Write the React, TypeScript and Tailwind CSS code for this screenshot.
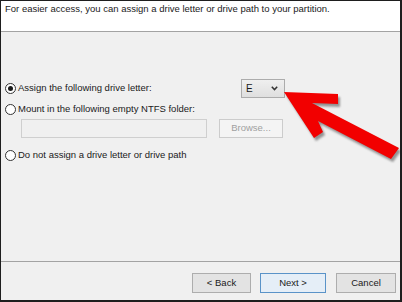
const font = { fontFamily: '"Liberation Sans", Arial, sans-serif' };

function Radio({ checked }: { checked?: boolean }) {
  return (
    <span className="w-[11px] h-[11px] rounded-full border border-[#333] bg-white flex items-center justify-center shrink-0">
      {checked && <span className="w-[5px] h-[5px] rounded-full bg-[#1a1a1a]" />}
    </span>
  );
}

function Btn({ label, w, focused }: { label: string; w: string; focused?: boolean }) {
  return (
    <div
      className={`${w} h-[20px] flex items-center justify-center border text-[9.5px] text-[#1a1a1a] ${
        focused ? "border-[#5a93c8] bg-[#e5eef7]" : "border-[#adadad] bg-[#e3e3e3]"
      }`}
    >
      {label}
    </div>
  );
}

export default function App() {
  const pts = [
    [284, 92],
    [338, 94],
    [338, 104],
    [312, 103],
    [399, 148],
    [391, 159],
    [318, 121],
    [323, 132],
    [314, 138],
  ]
    .map((p) => p.join(","))
    .join(" ");

  return (
    <div
      className="relative w-[402px] h-[302px] overflow-hidden flex flex-col bg-[#f0f0f0] border-l border-t border-r-2 border-b-2 border-[#1e1e1e] text-[#1a1a1a]"
      style={font}
    >
      <div className="h-[31px] bg-white border-b border-[#a3a3a3] pl-[4px] pt-[1px] text-[9.5px] leading-[14px]">
        For easier access, you can assign a drive letter or drive path to your partition.
      </div>

      <div className="flex-1 pt-[47px] pl-[4px] text-[9.5px]">
        <div className="flex items-center h-[19px]">
          <div className="w-[236px] flex items-center gap-[2px]">
            <Radio checked />
            <span>Assign the following drive letter:</span>
          </div>
          <div className="w-[44px] h-[19px] border border-[#acacac] bg-gradient-to-b from-[#efefef] to-[#dfdfdf] flex items-center justify-between pl-[4px] pr-[6px] text-[10px]">
            <span>E</span>
            <svg width="7" height="5" viewBox="0 0 7 5">
              <path d="M0.8 0.8 L3.5 3.6 L6.2 0.8" fill="none" stroke="#333" strokeWidth="1.5" />
            </svg>
          </div>
        </div>

        <div className="flex items-center gap-[2px] h-[14px] mt-[4px]">
          <Radio />
          <span>Mount in the following empty NTFS folder:</span>
        </div>

        <div className="flex items-center mt-[3px] h-[19px]">
          <div className="ml-[16px] w-[186px] h-[19px] border border-[#cfcfcf] bg-[#f0f0f0]" />
          <div className="ml-[12px] w-[64px] h-[19px] border border-[#cccccc] bg-[#f4f4f4] flex items-center justify-center text-[#a0a0a0]">
            Browse...
          </div>
        </div>

        <div className="flex items-center gap-[2px] h-[14px] mt-[10px]">
          <Radio />
          <span>Do not assign a drive letter or drive path</span>
        </div>
      </div>

      <div className="h-[39px] border-t border-[#a3a3a3] pt-[11px] pr-[4px] flex justify-end items-start">
        <Btn label="< Back" w="w-[59px]" />
        <div className="w-[9px]" />
        <Btn label="Next >" w="w-[66px]" focused />
        <div className="w-[10px]" />
        <Btn label="Cancel" w="w-[60px]" />
      </div>

      <svg className="absolute left-[-1px] top-[-1px] pointer-events-none" width="402" height="302" viewBox="0 0 402 302">
        <defs>
          <filter id="sh" x="-20%" y="-20%" width="140%" height="140%">
            <feGaussianBlur stdDeviation="1.2" />
          </filter>
        </defs>
        <polygon points={pts} fill="#555" opacity="0.6" transform="translate(2,3)" filter="url(#sh)" />
        <polygon points={pts} fill="#f20000" />
      </svg>
    </div>
  );
}
